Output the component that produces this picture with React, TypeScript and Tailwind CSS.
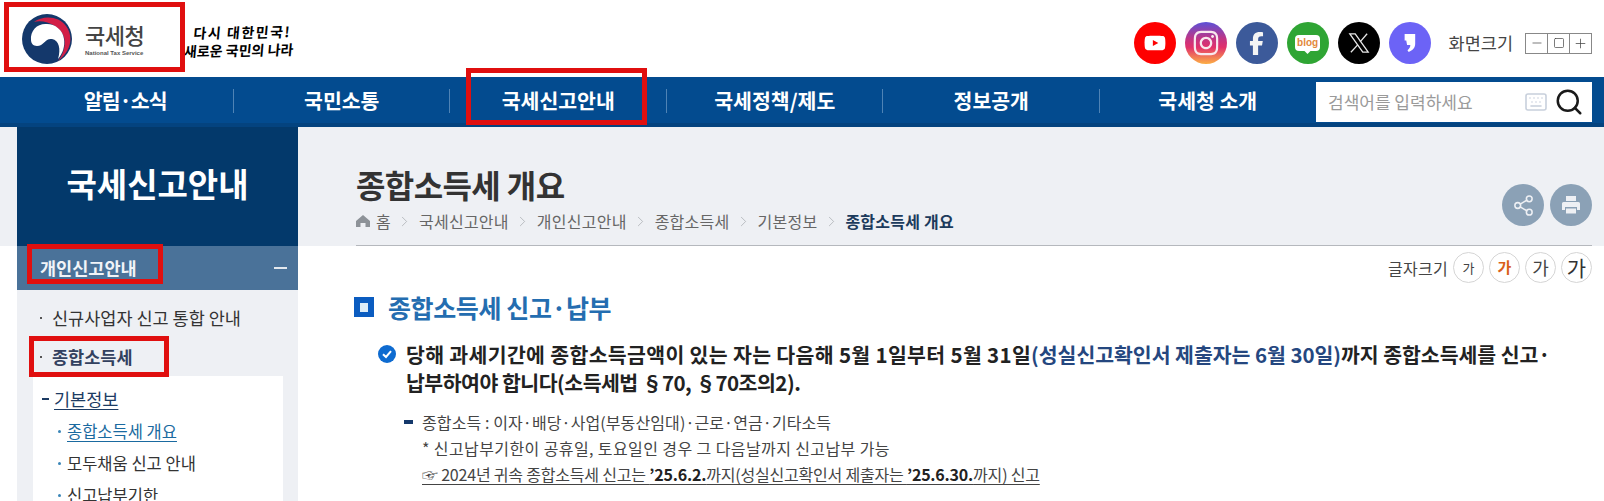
import React from 'react';
import { FaYoutube, FaInstagram, FaFacebookF } from 'react-icons/fa6';
import { Keyboard, Search, Share2, ChevronRight, Minus, Plus, Square } from 'lucide-react';

const NAV_ITEMS = ['알림·소식', '국민소통', '국세신고안내', '국세정책/제도', '정보공개', '국세청 소개'];
const CRUMBS = ['국세신고안내', '개인신고안내', '종합소득세', '기본정보'];

const Logo = () => (
    <svg viewBox="0 0 52 52" className="w-[52px] h-[52px] shrink-0">
        <circle cx="26" cy="26" r="25" fill="#14386b" />
        <path d="M13 9 C22 2 38 3 45 13 C53 24 50 38 37 48 C43 40 45 32 43 24 C40 14 25 6 13 9Z" fill="#d21f47" />
        <path d="M10 27 C9 17 17 10 26 11 C34 11 42 17 43 26 C44 33 42 40 37 46 C40 36 38 27 31 26 C24 25 23 33 16 33 C12 33 10 30 10 27Z" fill="#fff" />
    </svg>
);

const SocialIcons = () => (
    <div className="flex items-center gap-[9px]">
        <span className="w-[42px] h-[42px] rounded-full bg-[#fe0000] flex items-center justify-center text-white"><FaYoutube size={22} /></span>
        <span className="w-[42px] h-[42px] rounded-full bg-[linear-gradient(180deg,#5b51d8_0%,#c13584_40%,#e1306c_60%,#fcaf45_100%)] flex items-center justify-center text-[#f8e8ee]"><FaInstagram size={28} /></span>
        <span className="w-[42px] h-[42px] rounded-full bg-[#3c5a9a] flex items-center justify-center text-[#f4f4f4]"><FaFacebookF size={23} /></span>
        <span className="w-[42px] h-[42px] rounded-full bg-[#2fa534] flex items-center justify-center">
            <span className="relative w-[25px] h-[16px] rounded-[4px] bg-white text-[#e2873a] text-[10px] leading-[15px] font-bold text-center font-['Liberation_Sans',sans-serif]">
                blog
                <span className="absolute left-[10px] top-[13px] w-[5px] h-[5px] bg-white rotate-45" />
            </span>
        </span>
        <span className="w-[42px] h-[42px] rounded-full bg-black flex items-center justify-center">
            <svg viewBox="0 0 24 24" className="w-[26px] h-[26px]" fill="none" stroke="#e8e8e8" strokeWidth="1.2">
                <path d="M3.5 3.5 H8.5 L20.5 20.5 H15.5 Z" />
                <path d="M19.5 3.5 L13 11" />
                <path d="M11 13.5 L4.5 20.5" />
            </svg>
        </span>
        <span className="w-[42px] h-[42px] rounded-full bg-[#6c63f6] flex items-center justify-center">
            <svg viewBox="0 0 16 24" className="w-[13px] h-[20px]"><path d="M2 1 H15 V13 C15 18 12 21 7 23 L5.500 21 C8 19 9 17 9 14.500 H5 L4 9 H2 Z" fill="#fff" /></svg>
        </span>
    </div>
);

const SizeButton = ({ label, className }: { label: string; className: string }) => (
    <span className={`w-[31px] h-[31px] rounded-full border border-[#d5d5d5] flex items-center justify-center ${className}`}>{label}</span>
);

const Chevron = () => <ChevronRight size={17} strokeWidth={1} className="mx-[5.5px] text-[#a5a8ad]" />;

export default function App() {
    return (
        <div className="relative w-[1604px] h-[501px] overflow-hidden bg-white font-['Noto_Sans_CJK_KR','Noto_Sans',sans-serif] text-[#333]">
            {/* top header */}
            <header className="h-[77px] flex items-center justify-between pr-[12px]">
                <div className="flex items-center">
                    <div className="flex items-center w-[185px] pl-[21px] gap-[12px]">
                        <Logo />
                        <div className="flex flex-col items-start">
                            <span className="text-[22px] leading-[28px] font-medium text-[#444] tracking-[-0.5px]">국세청</span>
                            <span className="text-[6px] leading-[10px] text-[#555] font-['Liberation_Sans',sans-serif] font-bold">National Tax Service</span>
                        </div>
                    </div>
                    <div className="-rotate-1 -skew-x-6 text-black font-bold text-[14px] leading-[18px] pt-[4px]">
                        <div className="pl-[8px] tracking-[1.5px]">다시 대한민국!</div>
                        <div>새로운 국민의 나라</div>
                    </div>
                </div>
                <div className="flex items-center pt-[9px]">
                    <SocialIcons />
                    <span className="ml-[18px] text-[17.5px] text-[#444]">화면크기</span>
                    <div className="ml-[12px] flex w-[67px] h-[21px] border border-[#888] text-[#444]">
                        <span className="flex-1 flex items-center justify-center border-r border-[#888]"><Minus size={14} strokeWidth={1.2} /></span>
                        <span className="flex-1 flex items-center justify-center border-r border-[#888]"><Square size={12} strokeWidth={1.4} /></span>
                        <span className="flex-1 flex items-center justify-center"><Plus size={15} strokeWidth={1.2} /></span>
                    </div>
                </div>
            </header>

            {/* main nav */}
            <nav className="h-[50px] bg-[#034b8f] border-b-[4px] border-[#04437f] pl-[17px] pr-[12px] flex items-start">
                {NAV_ITEMS.map((item, i) => (
                    <div key={item} className="relative w-[216.5px] h-[46px] flex items-center justify-center text-white font-bold text-[20.5px]">
                        <span className={i === 0 ? 'tracking-[-0.9px]' : ''}>{item}</span>
                        {i < NAV_ITEMS.length - 1 && <span className="absolute right-0 top-[12px] h-[24px] w-px bg-[#4f83b5]" />}
                    </div>
                ))}
                <div className="mt-[5px] w-[276px] h-[40px] bg-white flex items-center pl-[12px] pr-[8px]">
                    <span className="text-[17px] text-[#9a9a9a]">검색어를 입력하세요</span>
                    <Keyboard size={24} className="ml-auto text-[#c8d0dc]" strokeWidth={1.6} />
                    <Search size={30} className="ml-[6px] text-[#1a1a1a]" strokeWidth={2} />
                </div>
            </nav>

            {/* title band */}
            <section className="h-[119px] bg-[#eef0f4] flex pl-[17px] pr-[12px]">
                <div className="w-[281px] bg-[#03396b] flex items-center justify-center text-white font-bold text-[33px] pb-[6px]">
                    국세신고안내
                </div>
                <div className="ml-[58px] flex-1 border-b border-[#b5b8bd] flex justify-between">
                    <div className="pt-[38px]">
                        <h1 className="text-[32px] leading-[38px] font-bold text-[#333] tracking-[-0.6px]">종합소득세 개요</h1>
                        <div className="mt-[8px] flex items-center text-[16px] leading-[20px] text-[#666] tracking-[0.25px]">
                            <svg viewBox="0 0 14 14" className="w-[14px] h-[14px] mr-[6px]"><path d="M7 1 L14 7 V13 H9.500 V9 H4.500 V13 H0 V7 Z" fill="#8d9298" /></svg>
                            <span>홈</span>
                            {CRUMBS.map(c => (
                                <React.Fragment key={c}>
                                    <Chevron />
                                    <span>{c}</span>
                                </React.Fragment>
                            ))}
                            <Chevron />
                            <span className="font-bold text-[#1c3b5c]">종합소득세 개요</span>
                        </div>
                    </div>
                    <div className="flex gap-[6px] pt-[57px]">
                        <span className="w-[42px] h-[42px] rounded-full bg-[#8ba1b6] flex items-center justify-center text-[#eef0f4]"><Share2 size={23} strokeWidth={1.6} /></span>
                        <span className="w-[42px] h-[42px] rounded-full bg-[#8ba1b6] flex items-center justify-center">
                            <svg viewBox="0 0 24 24" className="w-[24px] h-[24px]" fill="#eef0f4">
                                <rect x="7" y="3" width="10" height="5" />
                                <path d="M4.500 9 H19.500 A1.500 1.500 0 0 1 21 10.500 V17 H18 V14 H6 V17 H3 V10.500 A1.500 1.500 0 0 1 4.500 9Z" />
                                <rect x="7" y="15.500" width="10" height="5" />
                            </svg>
                        </span>
                    </div>
                </div>
            </section>

            {/* body */}
            <section className="flex pl-[17px] pr-[12px]">
                <aside className="w-[281px] h-[255px] bg-[#eef0f4] shrink-0">
                    <div className="h-[44px] bg-[#4a7299] flex items-center justify-between pl-[23px] pr-[11px] text-white">
                        <span className="text-[17.5px] font-bold text-[#f1f4f8]">개인신고안내</span>
                        <span className="w-[13px] h-[2px] bg-[#e3e8ee]" />
                    </div>
                    <ul className="pt-[16px] text-[17.5px] leading-[24px]">
                        <li className="flex items-center pl-[23px] text-[#333]"><span className="w-[2px] h-[2px] bg-[#555] mr-[10px]" />신규사업자 신고 통합 안내</li>
                        <li className="mt-[15px] flex items-center pl-[23px] font-bold text-[#33415f]"><span className="w-[2px] h-[2px] bg-[#555] mr-[10px]" />종합소득세</li>
                    </ul>
                    <div className="mt-[7px] ml-[16px] w-[250px] h-[140px] bg-white pt-[11px]">
                        <div className="flex items-center pl-[9px] text-[17.5px] leading-[24px] text-[#1c3b63]"><span className="w-[7px] h-[2px] bg-[#1c3b63] mr-[5px]" /><span className="underline underline-offset-[3px]">기본정보</span></div>
                        <div className="mt-[8px] flex items-center pl-[25px] text-[16.5px] leading-[24px] text-[#1a6aa0]"><span className="w-[3px] h-[3px] rounded-full bg-[#3a86b8] mr-[6px]" /><span className="underline underline-offset-[3px]">종합소득세 개요</span></div>
                        <div className="mt-[8px] flex items-center pl-[25px] text-[16.5px] leading-[24px] text-[#333]"><span className="w-[3px] h-[3px] rounded-full bg-[#3a86b8] mr-[6px]" />모두채움 신고 안내</div>
                        <div className="mt-[8px] flex items-center pl-[25px] text-[16.5px] leading-[24px] text-[#333]"><span className="w-[3px] h-[3px] rounded-full bg-[#3a86b8] mr-[6px]" />신고납부기한</div>
                    </div>
                </aside>

                <main className="flex-1 ml-[58px]">
                    <div className="mt-[6px] flex justify-end items-center gap-[5px]">
                        <span className="text-[16px] text-[#444] tracking-[0.3px]">글자크기</span>
                        <SizeButton label="가" className="text-[13px] text-[#444]" />
                        <SizeButton label="가" className="text-[15px] font-bold text-[#d9601a]" />
                        <SizeButton label="가" className="text-[18px] text-[#444]" />
                        <SizeButton label="가" className="text-[21px] text-[#333]" />
                    </div>
                    <h2 className="mt-[10px] flex items-center text-[25px] leading-[28px] font-bold text-[#246db0] tracking-[-0.4px]">
                        <span className="w-[20px] h-[20px] bg-[#0b5cc0] flex items-center justify-center mr-[5px] ml-[-2px]"><span className="w-[8px] h-[9px] bg-[#dcecf8]" /></span>
                        <span className="ml-[9px]">종합소득세 신고·납부</span>
                    </h2>
                    <div className="mt-[19px] flex pl-[22px]">
                        <span className="w-[18px] h-[18px] mt-[5px] rounded-full bg-[#0e6bd0] flex items-center justify-center shrink-0">
                            <svg viewBox="0 0 12 12" className="w-[12px] h-[12px]"><path d="M2 6.200 L5 9 L10 3.200" stroke="#fff" strokeWidth="2" fill="none" /></svg>
                        </span>
                        <p className="ml-[10px] text-[20.5px] leading-[28px] font-bold text-[#222] whitespace-nowrap tracking-[-0.05px]">
                            <span className="tracking-[0.33px]">당해 과세기간에 종합소득금액이 있는 자는 다음해 5월 1일부터 5월 31일</span><span className="text-[#25477f]">(성실신고확인서 제출자는 6월 30일)</span>까지 종합소득세를 신고·<br /><span className="tracking-[-0.5px]">납부하여야 합니다(소득세법 §70, §70조의2).</span>
                        </p>
                    </div>
                    <div className="mt-[13px] pl-[48px] text-[16px] leading-[26px] text-[#444]">
                        <div className="flex items-center tracking-[0.1px]"><span className="w-[9px] h-[4px] bg-[#14386b] mr-[9px]" />종합소득 : 이자·배당·사업(부동산임대)·근로·연금·기타소득</div>
                        <div className="pl-[18px] tracking-[0.4px]">* 신고납부기한이 공휴일, 토요일인 경우 그 다음날까지 신고납부 가능</div>
                        <div className="pl-[18px] tracking-[-0.2px]"><span className="underline underline-offset-[3px]">☞ 2024년 귀속 종합소득세 신고는 <b className="text-[#222]">’25.6.2.</b>까지(성실신고확인서 제출자는 <b className="text-[#222]">’25.6.30.</b>까지) 신고</span></div>
                    </div>
                </main>
            </section>

            {/* red annotation boxes drawn over the page */}
            <div className="absolute left-[4px] top-[2px] w-[181px] h-[70px] border-[5px] border-[#e00f0f]" />
            <div className="absolute left-[466px] top-[68px] w-[181px] h-[57px] border-[5px] border-[#e00f0f]" />
            <div className="absolute left-[27px] top-[244px] w-[136px] h-[40px] border-[5px] border-[#e00f0f]" />
            <div className="absolute left-[29px] top-[336px] w-[140px] h-[41px] border-[5px] border-[#e00f0f]" />
        </div>
    );
}
